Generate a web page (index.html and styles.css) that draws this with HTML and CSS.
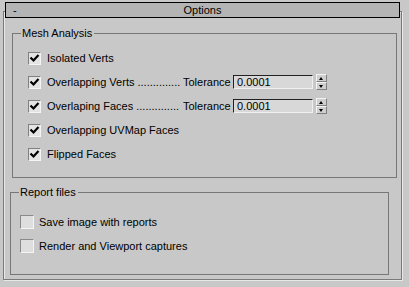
FILE: index.html
```html
<!DOCTYPE html>
<html>
<head>
<meta charset="utf-8">
<link rel="stylesheet" href="styles.css">
</head>
<body>
<div class="rollout">
  <div class="header"><span class="minus">-</span><span class="title">Options</span></div>
  <div class="frame">
    <fieldset class="group mesh">
      <legend>Mesh Analysis</legend>
      <div class="row"><span class="cb"><svg viewBox="0 0 11 11" width="11" height="11"><path d="M1.5 4.5 L4.5 7.5 L9.5 2" fill="none" stroke="#000" stroke-width="2.2"/></svg></span><span class="lbl">Isolated Verts</span></div>
      <div class="row"><span class="cb"><svg viewBox="0 0 11 11" width="11" height="11"><path d="M1.5 4.5 L4.5 7.5 L9.5 2" fill="none" stroke="#000" stroke-width="2.2"/></svg></span><span class="lbl fixed">Overlapping Verts ..............</span><span class="tol">Tolerance</span><span class="field">0.0001</span><span class="spin"><span class="up"></span><span class="down"></span></span></div>
      <div class="row"><span class="cb"><svg viewBox="0 0 11 11" width="11" height="11"><path d="M1.5 4.5 L4.5 7.5 L9.5 2" fill="none" stroke="#000" stroke-width="2.2"/></svg></span><span class="lbl fixed">Overlaping Faces ..............</span><span class="tol">Tolerance</span><span class="field">0.0001</span><span class="spin"><span class="up"></span><span class="down"></span></span></div>
      <div class="row"><span class="cb"><svg viewBox="0 0 11 11" width="11" height="11"><path d="M1.5 4.5 L4.5 7.5 L9.5 2" fill="none" stroke="#000" stroke-width="2.2"/></svg></span><span class="lbl">Overlapping UVMap Faces</span></div>
      <div class="row"><span class="cb"><svg viewBox="0 0 11 11" width="11" height="11"><path d="M1.5 4.5 L4.5 7.5 L9.5 2" fill="none" stroke="#000" stroke-width="2.2"/></svg></span><span class="lbl">Flipped Faces</span></div>
    </fieldset>
    <fieldset class="group report">
      <legend>Report files</legend>
      <div class="row"><span class="cb off"></span><span class="lbl">Save image with reports</span></div>
      <div class="row"><span class="cb off"></span><span class="lbl">Render and Viewport captures</span></div>
    </fieldset>
  </div>
</div>
</body>
</html>
```
FILE: styles.css
```css
html, body {
  margin: 0;
  padding: 0;
  background: #c8c8c8;
  font-family: "Liberation Sans", Arial, sans-serif;
  font-size: 11px;
  color: #000;
}
.rollout {
  padding-top: 2px;
  width: 409px;
  height: 287px;
  box-sizing: border-box;
}
.header {
  position: relative;
  z-index: 1;
  margin-left: 5px;
  width: 395px;
  height: 16px;
  box-sizing: border-box;
  border: 1px solid #000;
  background: #b4b4b4;
  display: flex;
  align-items: center;
  justify-content: center;
  line-height: 14px;
}
.minus {
  position: absolute;
  left: 7px;
  top: 0;
}
.frame {
  margin-top: -7px;
  margin-left: 3px;
  width: 399px;
  height: 269px;
  box-sizing: border-box;
  border: 1px solid #7a7a7a;
  box-shadow: 1px 1px 0 #e8e8e8, inset 1px 1px 0 #e8e8e8;
  padding-top: 15px;
}
.group {
  margin: 0;
  border: 1px solid #777;
  box-sizing: border-box;
  padding: 0;
}
.group legend {
  padding: 0 2px 0 1px;
  line-height: 13px;
}
.mesh {
  margin-left: 8px;
  width: 385px;
  height: 151px;
  padding: 6px 0 0 15px;
}
.mesh legend { margin-left: -7px; }
.report {
  margin-top: 8px;
  margin-left: 6px;
  width: 379px;
  height: 89px;
  padding: 11px 0 0 9px;
}
.report legend { margin-left: -1px; }
.row {
  display: flex;
  align-items: center;
  height: 24px;
}
.cb {
  width: 13px;
  height: 13px;
  box-sizing: border-box;
  border-top: 1px solid #808080;
  border-left: 1px solid #808080;
  border-right: 1px solid #f4f4f4;
  border-bottom: 1px solid #f4f4f4;
  background: #e4e4e4;
  display: flex;
  align-items: center;
  justify-content: center;
  flex: none;
}
.cb.off {
  width: 14px;
  height: 14px;
  background: #dedede;
  border-top: 1px solid #8a8a8a;
  border-left: 1px solid #8a8a8a;
}
.lbl {
  margin-left: 6px;
  white-space: nowrap;
}
.report .lbl { margin-left: 5px; }
.fixed {
  width: 136px;
  overflow: hidden;
}
.tol {
  width: 50px;
}
.field {
  width: 80px;
  height: 14px;
  box-sizing: border-box;
  border-top: 1px solid #222;
  border-left: 1px solid #222;
  border-right: 1px solid #f0f0f0;
  border-bottom: 1px solid #f0f0f0;
  background: #d8d8d8;
  line-height: 12px;
  padding-left: 3px;
}
.spin {
  margin-left: 3px;
  width: 11px;
  height: 16px;
  display: flex;
  flex-direction: column;
}
.spin span {
  flex: 1;
  box-sizing: border-box;
  border-top: 1px solid #f4f4f4;
  border-left: 1px solid #f4f4f4;
  border-right: 1px solid #808080;
  border-bottom: 1px solid #808080;
  background: #cfcfcf;
  position: relative;
}
.spin .up::after, .spin .down::after {
  content: "";
  position: absolute;
  left: 2px;
  top: 2px;
  border-left: 2.5px solid transparent;
  border-right: 2.5px solid transparent;
}
.spin .up::after { border-bottom: 3px solid #000; }
.spin .down::after { border-top: 3px solid #000; }
```
